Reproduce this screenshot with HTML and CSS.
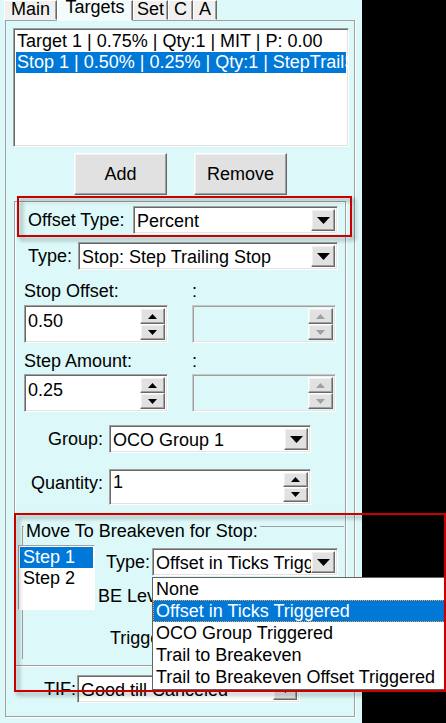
FILE: index.html
```html
<!DOCTYPE html>
<html lang="en">
<head>
    <meta charset="UTF-8">
    <title>Order Targets</title>
    <link rel="stylesheet" href="styles.css">
</head>
<body>
    <div class="window">
        <div class="tabs">
            <div class="tab tab-main">Main</div>
            <div class="tab tab-active">Targets</div>
            <div class="tab tab-set">Set</div>
            <div class="tab tab-c">C</div>
            <div class="tab tab-a">A</div>
        </div>

        <div class="page">
            <!-- list of targets / stops on the order -->
            <div class="listbox orders">
                <div class="item">Target 1 | 0.75% | Qty:1 | MIT | P: 0.00</div>
                <div class="item selected">Stop 1 | 0.50% | 0.25% | Qty:1 | StepTrailStop</div>
            </div>

            <div class="buttons">
                <div class="btn">Add</div>
                <div class="btn">Remove</div>
            </div>

            <div class="group">
                <div class="row offset-row">
                    <span class="label">Offset Type:</span>
                    <div class="combo offset-combo">
                        <span class="combo-text">Percent</span>
                        <span class="drop"><svg width="13" height="7" viewBox="0 0 13 7"><polygon points="0,0 13,0 6.5,7" /></svg></span>
                    </div>
                </div>

                <div class="row type-row">
                    <span class="label">Type:</span>
                    <div class="combo type-combo">
                        <span class="combo-text">Stop: Step Trailing Stop</span>
                        <span class="drop"><svg width="13" height="7" viewBox="0 0 13 7"><polygon points="0,0 13,0 6.5,7" /></svg></span>
                    </div>
                </div>

                <div class="pair captions first">
                    <span>Stop Offset:</span>
                    <span>:</span>
                </div>
                <div class="pair spins">
                    <div class="spin">
                        <span class="spin-text">0.50</span>
                        <span class="spin-btns">
                            <span class="sb"><svg width="9" height="5" viewBox="0 0 9 5"><polygon points="0,5 9,5 4.5,0" /></svg></span>
                            <span class="sb"><svg width="9" height="5" viewBox="0 0 9 5"><polygon points="0,0 9,0 4.5,5" /></svg></span>
                        </span>
                    </div>
                    <div class="spin disabled">
                        <span class="spin-text"></span>
                        <span class="spin-btns">
                            <span class="sb"><svg width="9" height="5" viewBox="0 0 9 5"><polygon points="0,5 9,5 4.5,0" /></svg></span>
                            <span class="sb"><svg width="9" height="5" viewBox="0 0 9 5"><polygon points="0,0 9,0 4.5,5" /></svg></span>
                        </span>
                    </div>
                </div>

                <div class="pair captions second">
                    <span>Step Amount:</span>
                    <span>:</span>
                </div>
                <div class="pair spins spins-2">
                    <div class="spin">
                        <span class="spin-text">0.25</span>
                        <span class="spin-btns">
                            <span class="sb"><svg width="9" height="5" viewBox="0 0 9 5"><polygon points="0,5 9,5 4.5,0" /></svg></span>
                            <span class="sb"><svg width="9" height="5" viewBox="0 0 9 5"><polygon points="0,0 9,0 4.5,5" /></svg></span>
                        </span>
                    </div>
                    <div class="spin disabled">
                        <span class="spin-text"></span>
                        <span class="spin-btns">
                            <span class="sb"><svg width="9" height="5" viewBox="0 0 9 5"><polygon points="0,5 9,5 4.5,0" /></svg></span>
                            <span class="sb"><svg width="9" height="5" viewBox="0 0 9 5"><polygon points="0,0 9,0 4.5,5" /></svg></span>
                        </span>
                    </div>
                </div>

                <div class="field group-row">
                    <span class="label">Group:</span>
                    <div class="combo">
                        <span class="combo-text">OCO Group 1</span>
                        <span class="drop"><svg width="13" height="7" viewBox="0 0 13 7"><polygon points="0,0 13,0 6.5,7" /></svg></span>
                    </div>
                </div>

                <div class="field qty-row">
                    <span class="label">Quantity:</span>
                    <div class="spin qty">
                        <span class="spin-text">1</span>
                        <span class="spin-btns">
                            <span class="sb"><svg width="9" height="5" viewBox="0 0 9 5"><polygon points="0,5 9,5 4.5,0" /></svg></span>
                            <span class="sb"><svg width="9" height="5" viewBox="0 0 9 5"><polygon points="0,0 9,0 4.5,5" /></svg></span>
                        </span>
                    </div>
                </div>

                <fieldset class="breakeven">
                    <legend>Move To Breakeven for Stop:</legend>
                    <div class="be-body">
                        <div class="listbox steps">
                            <div class="item selected">Step 1</div>
                            <div class="item">Step 2</div>
                        </div>
                        <div class="be-fields">
                            <div class="be-type">
                                <span class="label">Type:</span>
                                <div class="combo be-combo">
                                    <span class="combo-text">Offset in Ticks Triggered</span>
                                    <span class="drop"><svg width="13" height="7" viewBox="0 0 13 7"><polygon points="0,0 13,0 6.5,7" /></svg></span>
                                </div>
                            </div>
                            <div class="be-level">BE Level:</div>
                            <div class="be-trigger">Trigger:</div>
                        </div>
                    </div>
                </fieldset>
            </div>

            <div class="tif-row">
                <span class="label">TIF:</span>
                <div class="combo tif-combo">
                    <span class="combo-text">Good till Canceled</span>
                    <span class="drop"><svg width="13" height="7" viewBox="0 0 13 7"><polygon points="0,0 13,0 6.5,7" /></svg></span>
                </div>
            </div>
        </div>
    </div>

    <!-- open drop-down of the breakeven type combo -->
    <div class="dropdown">
        <div class="opt">None</div>
        <div class="opt active">Offset in Ticks Triggered</div>
        <div class="opt">OCO Group Triggered</div>
        <div class="opt">Trail to Breakeven</div>
        <div class="opt">Trail to Breakeven Offset Triggered</div>
    </div>

    <!-- red callout frames -->
    <div class="callout callout-offset"></div>
    <div class="callout callout-breakeven"></div>
</body>
</html>
```

FILE: styles.css
```css
* {
    margin: 0;
    padding: 0;
    box-sizing: border-box;
}

body {
    position: relative;
    width: 446px;
    height: 723px;
    overflow: hidden;
    background: #000;
    font-family: "Liberation Sans", Arial, sans-serif;
    font-size: 18px;
    color: #000;
}

.window {
    width: 362px;
    height: 723px;
    background: #dcf8f8;
}

/* tab strip */
.tabs {
    display: flex;
    align-items: flex-end;
    height: 20px;
    padding-left: 4px;
}

.tab {
    height: 20px;
    line-height: 16px;
    text-align: center;
    background: #f0f0f0;
    border: 1px solid;
    border-color: #fff #696969 transparent #fff;
    box-shadow: inset -1px 0 #a0a0a0;
    white-space: nowrap;
}

.tab-main { width: 53px; }
.tab-set { width: 35px; }
.tab-c { width: 25px; }
.tab-a { width: 24px; }

.tab-active {
    position: relative;
    z-index: 1;
    width: 76px;
    height: 21px;
    margin-bottom: -1px;
    line-height: 12px;
    background: #f4fbfb;
}

.page {
    width: 350px;
    height: 697px;
    margin-left: 5px;
    padding: 7px 0 0 7px;
    border: 1px solid #a0a0a0;
    box-shadow: 1px 1px 0 #fff;
}

/* 3d borders */
.listbox,
.combo,
.spin {
    border: 1px solid;
    border-color: #a0a0a0 #fff #fff #a0a0a0;
    box-shadow: inset 1px 1px #696969, inset -1px -1px #e3e3e3;
}

.btn,
.drop,
.sb {
    background: #e1e1e1;
    border: 1px solid;
    border-color: #fff #696969 #696969 #fff;
    box-shadow: inset -1px -1px #a0a0a0, inset 1px 1px #f0f0f0;
}

.listbox {
    background: #fff;
    overflow: hidden;
    white-space: nowrap;
}

.item {
    height: 21px;
    line-height: 21px;
    padding-left: 1px;
}

.item.selected {
    background: #0078d7;
    color: #fff;
}

.orders {
    width: 336px;
    height: 119px;
    padding: 2px;
}

.buttons {
    display: flex;
    gap: 27px;
    margin: 6px 0 0 61px;
}

.btn {
    width: 93px;
    height: 42px;
    line-height: 40px;
    text-align: center;
}

/* big group frame */
.group {
    width: 332px;
    height: 465px;
    margin: 6px 0 0 1px;
    padding: 4px 7px 0 9px;
    border: 1px solid #a0a0a0;
    box-shadow: 1px 1px 0 #fff, inset 1px 1px 0 #fff;
}

.row {
    display: flex;
    align-items: center;
    height: 28px;
}

.row .label {
    margin-left: 4px;
}

.row .combo {
    margin-left: auto;
}

.type-row {
    margin-top: 8px;
}

.offset-combo { width: 205px; }
.type-combo { width: 260px; }

.combo {
    display: flex;
    height: 28px;
    background: #fff;
    padding: 2px;
}

.combo-text {
    flex: 1;
    overflow: hidden;
    white-space: nowrap;
    line-height: 24px;
    padding-left: 1px;
}

.drop {
    display: flex;
    align-items: center;
    justify-content: center;
    width: 24px;
    flex-shrink: 0;
}

.drop svg,
.sb svg {
    fill: #000;
}

.pair {
    display: grid;
    grid-template-columns: 144px 144px;
    column-gap: 24px;
}

.captions {
    line-height: 21px;
}

.captions.first { margin-top: 11px; }
.captions.second { margin-top: 8px; }

.spins { margin-top: 3px; }
.spins-2 { margin-top: 2px; }

.spin {
    display: flex;
    height: 38px;
    background: #fff;
    padding: 2px;
}

.spin-text {
    flex: 1;
    padding: 3px 0 0 1px;
    line-height: 21px;
}

.spin-btns {
    display: flex;
    flex-direction: column;
    width: 25px;
}

.sb {
    flex: 1;
    display: flex;
    align-items: center;
    justify-content: center;
}

.spin.disabled {
    background: transparent;
    border-color: #c8c8c8 #fff #fff #c8c8c8;
    box-shadow: inset 1px 1px #a0a0a0, inset -1px -1px #e3e3e3;
}

.spin.disabled .sb svg {
    fill: #a0a0a0;
}

.field {
    display: grid;
    grid-template-columns: 79px 202px;
    column-gap: 6px;
    align-items: center;
}

.field .label {
    text-align: right;
    line-height: 21px;
}

.group-row {
    margin-top: 13px;
}

.qty-row {
    margin-top: 16px;
    align-items: start;
}

.qty-row .label {
    margin-top: 4px;
}

.spin.qty {
    height: 36px;
}

.spin.qty .spin-text {
    padding-top: 0;
}

/* breakeven frame: its bottom and right edges sit on the outer group frame */
.breakeven {
    width: 322px;
    margin: 5px 0 0 -2px;
    padding: 0 0 10px;
    border: 1px solid #a0a0a0;
    border-right: none;
    border-bottom: none;
}

.breakeven legend {
    margin-left: 1px;
    padding: 11px 2px 0;
    line-height: 21px;
}

.be-body {
    display: grid;
    grid-template-columns: 77px 1fr;
    margin: 3px 0 0 -5px;
}

.steps {
    height: 65px;
    padding: 1px;
    box-shadow: none;
}

.steps .item {
    padding-left: 3px;
}

.be-type {
    display: flex;
    align-items: center;
    gap: 2px;
    padding-left: 11px;
    margin-top: 3px;
}

.be-combo {
    width: 186px;
}

.be-level {
    margin-top: 10px;
    padding-left: 3px;
    line-height: 21px;
}

.be-trigger {
    margin-top: 21px;
    padding-left: 15px;
    line-height: 21px;
}

.tif-row {
    display: flex;
    align-items: center;
    gap: 1px;
    margin: 9px 0 0 31px;
}

.tif-combo {
    width: 223px;
}

/* open list of the breakeven combo */
.dropdown {
    position: absolute;
    left: 152px;
    top: 577px;
    width: 294px;
    height: 113px;
    background: #fff;
    border: 1px solid #646464;
    white-space: nowrap;
}

.opt {
    height: 22px;
    line-height: 22px;
    padding-left: 3px;
}

.opt.active {
    background: #0078d7;
    color: #fff;
    outline: 1px dotted #f4a13c;
    outline-offset: -1px;
}

.callout {
    position: absolute;
    border: 2px solid #c80000;
    filter: drop-shadow(3px 3px 2px rgba(0, 0, 0, 0.4));
}

.callout-offset {
    left: 17px;
    top: 196px;
    width: 335px;
    height: 41px;
}

.callout-breakeven {
    left: 14px;
    top: 513px;
    width: 432px;
    height: 179px;
}
```
